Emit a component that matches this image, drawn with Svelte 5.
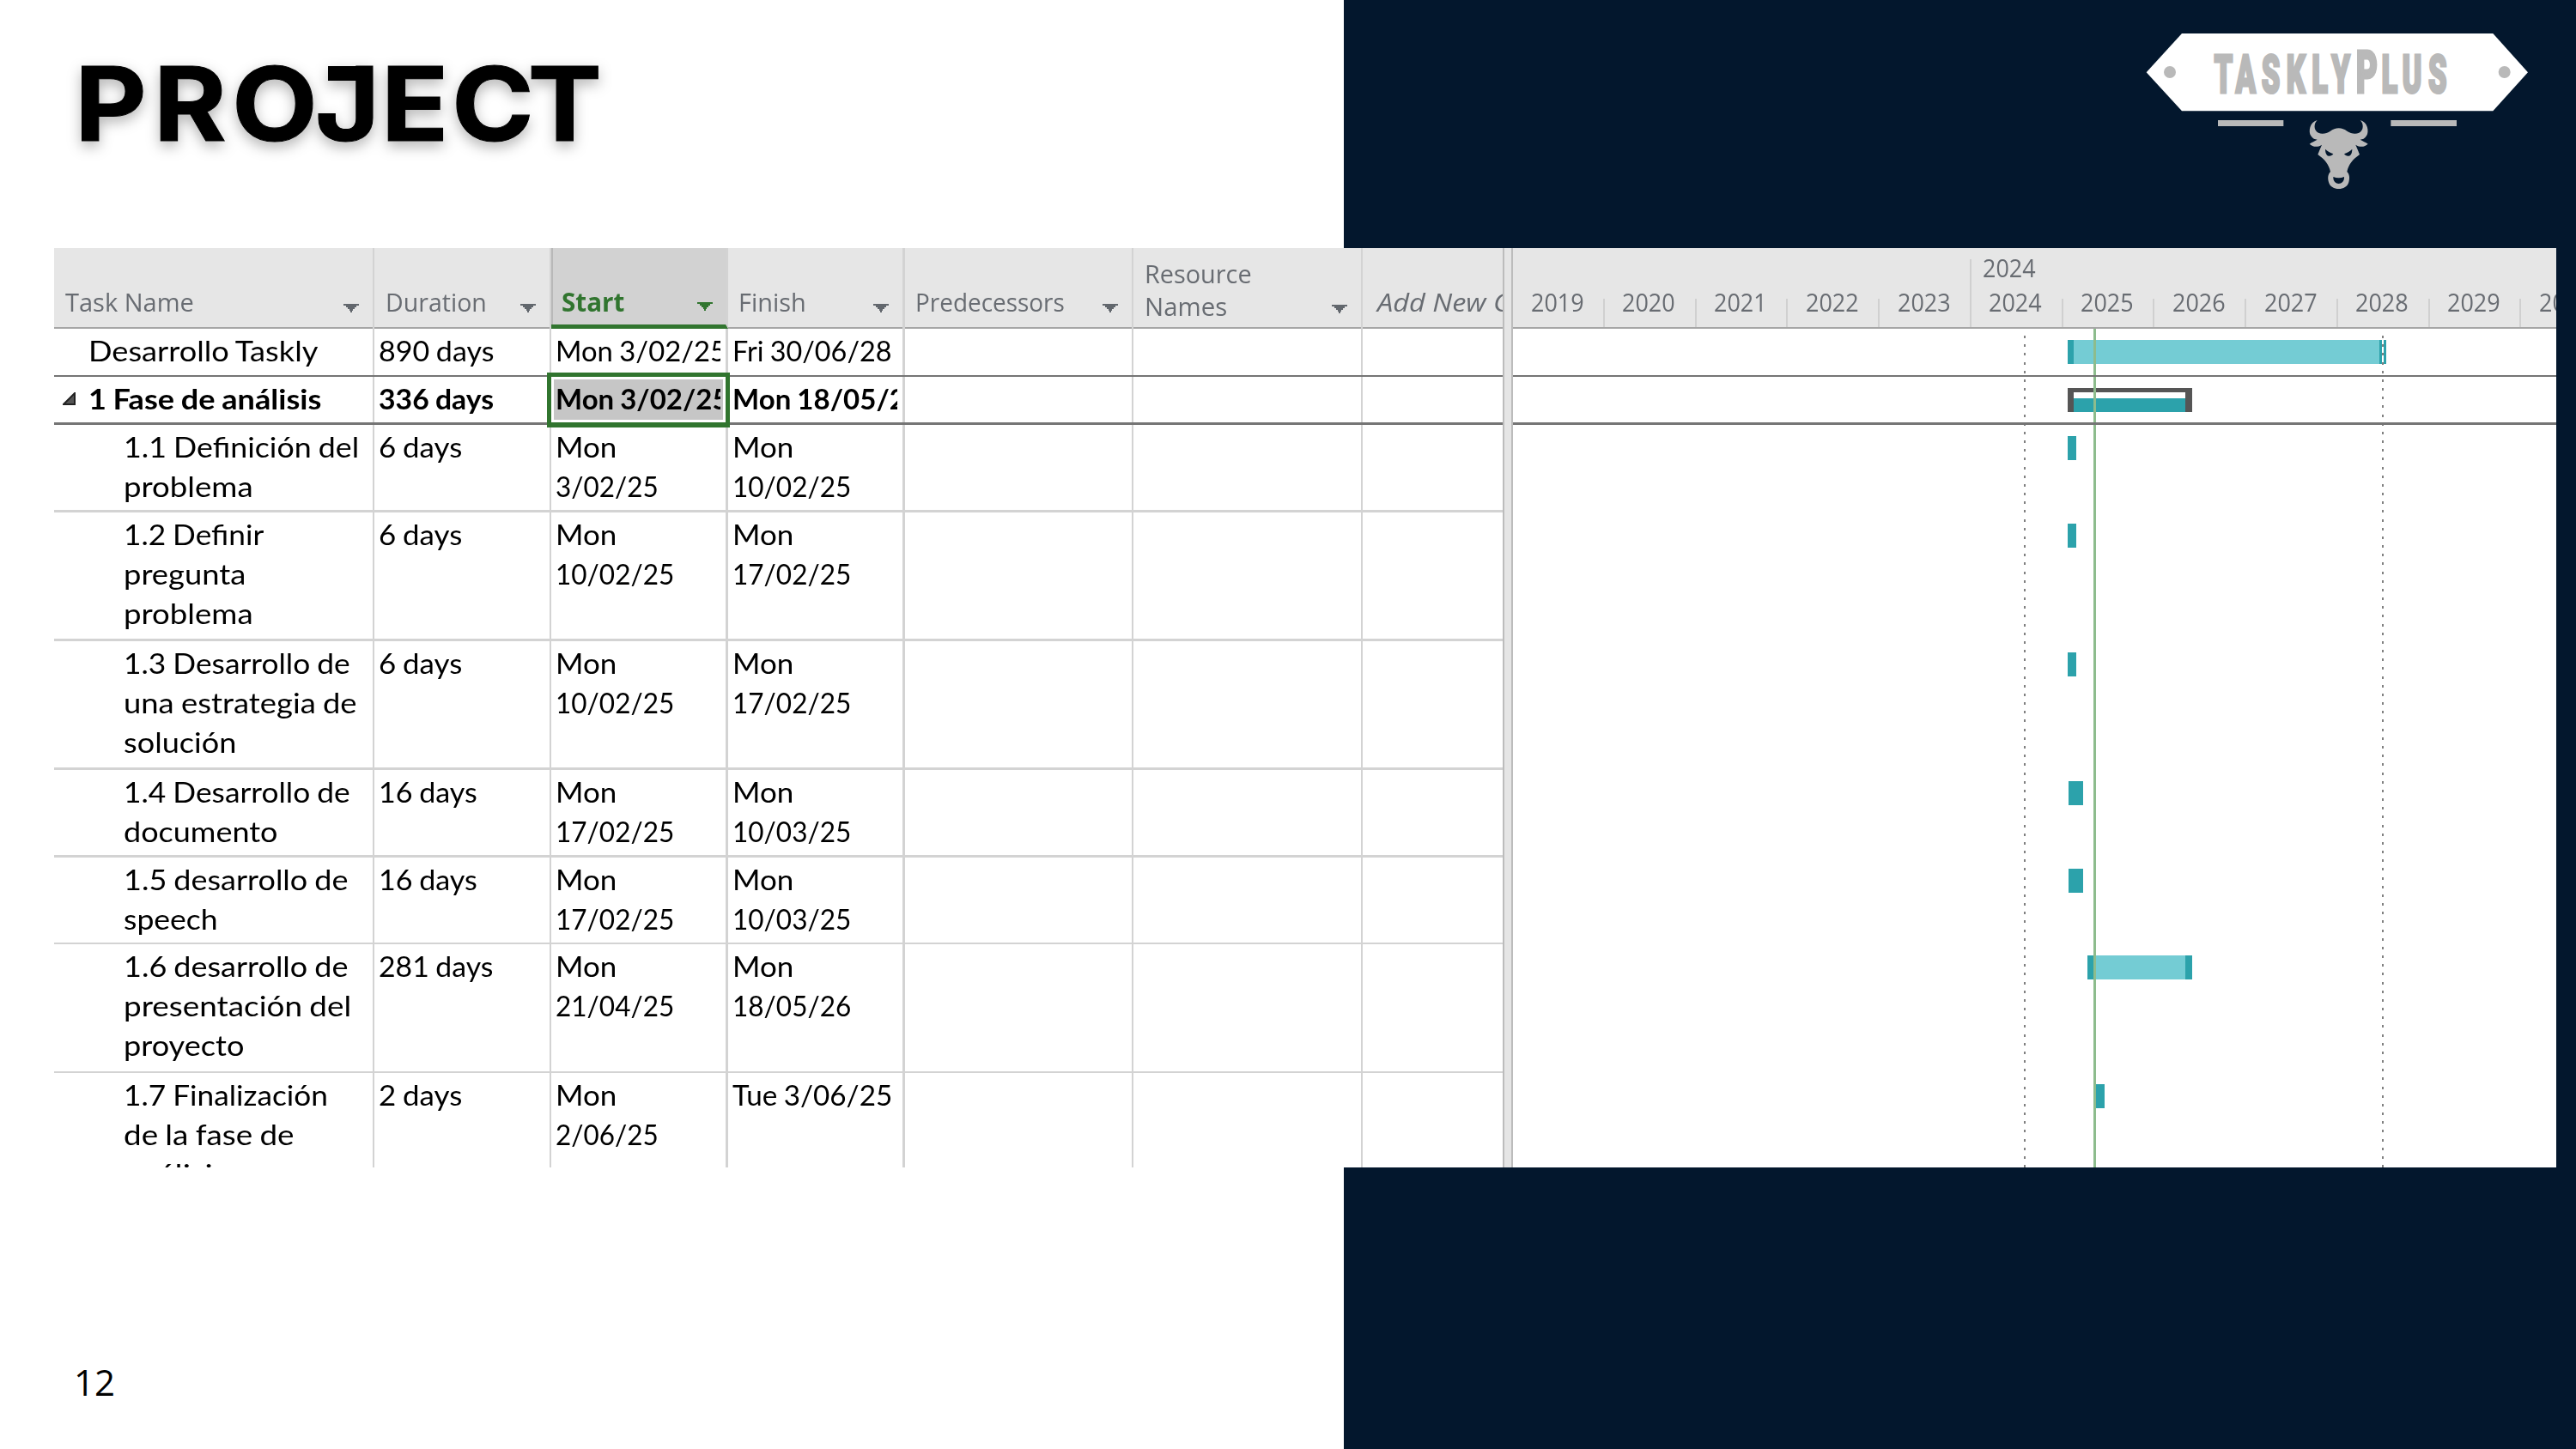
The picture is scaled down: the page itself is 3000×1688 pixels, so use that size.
<script>
  // Column captions and data, with the ink width every run of text occupies.
  const columns = [
    { lines: [['Task Name', 150]], pad: 13, arrow: true },
    { lines: [['Duration', 118]], pad: 13, arrow: true },
    { lines: [['Start', 73]], pad: 12, arrow: true, active: true },
    { lines: [['Finish', 79]], pad: 12, arrow: true },
    { lines: [['Predecessors', 174]], pad: 12, arrow: true },
    { lines: [['Resource', 125], ['Names', 96]], pad: 13, arrow: true, two: true },
    { lines: [['Add New C', 154]], pad: 17, italic: true },
  ];
  const mon = ['Mon', 71];
  const tasks = [
    { h: 56, indent: 40, name: [['Desarrollo Taskly', 267]], dur: ['890 days', 134], start: [['Mon 3/02/25', 199]], end: [['Fri 30/06/28', 186]], dark: true },
    { h: 56, indent: 40, bold: true, summary: true, name: [['1 Fase de análisis', 271]], dur: ['336 days', 134], start: [['Mon 3/02/25', 202]], end: [['Mon 18/05/26', 221]], dark: true },
    { h: 102, indent: 81, name: [['1.1 Definición del', 274], ['problema', 151]], dur: ['6 days', 97], start: [mon, ['3/02/25', 120]], end: [mon, ['10/02/25', 138]] },
    { h: 150, indent: 81, name: [['1.2 Definir', 163], ['pregunta', 142], ['problema', 151]], dur: ['6 days', 97], start: [mon, ['10/02/25', 138]], end: [mon, ['17/02/25', 138]] },
    { h: 150, indent: 81, name: [['1.3 Desarrollo de', 264], ['una estrategia de', 272], ['solución', 131]], dur: ['6 days', 97], start: [mon, ['10/02/25', 138]], end: [mon, ['17/02/25', 138]] },
    { h: 102, indent: 81, name: [['1.4 Desarrollo de', 264], ['documento', 180]], dur: ['16 days', 115], start: [mon, ['17/02/25', 138]], end: [mon, ['10/03/25', 138]] },
    { h: 101, indent: 81, thin: true, name: [['1.5 desarrollo de', 261], ['speech', 110]], dur: ['16 days', 115], start: [mon, ['17/02/25', 138]], end: [mon, ['10/03/25', 138]] },
    { h: 150, indent: 81, thin: true, name: [['1.6 desarrollo de', 261], ['presentación del', 265], ['proyecto', 140]], dur: ['281 days', 133], start: [mon, ['21/04/25', 138]], end: [mon, ['18/05/26', 138]] },
    { h: 110, indent: 81, last: true, name: [['1.7 Finalización', 238], ['de la fase de', 198], ['análisis', 120]], dur: ['2 days', 97], start: [mon, ['2/06/25', 120]], end: [['Tue 3/06/25', 186]] },
  ];
  const years = [2019, 2020, 2021, 2022, 2023, 2024, 2025, 2026, 2027, 2028, 2029, 2030];
  // Bars on the time scale: offsets inside the chart body.
  const bars = [
    { x: 646, y: 125, w: 10 }, { x: 646, y: 227, w: 10 }, { x: 646, y: 377, w: 10 },
    { x: 647, y: 527, w: 17 }, { x: 647, y: 629, w: 17 }, { x: 678, y: 880, w: 11 },
  ];
  const dots = Array.from({ length: 96 }, (_, i) => Math.round(8 + i * 10.17));

  function fit(node, width) {
    const apply = () => {
      node.style.transform = 'none';
      node.style.transform = `scaleX(${width / node.offsetWidth})`;
    };
    apply();
    document.fonts?.ready.then(apply);
  }
</script>

{#snippet lines(list)}
  {#each list as [text, width]}
    <div class="line"><span class="run" use:fit={width}>{text}</span></div>
  {/each}
{/snippet}

<main class="slide">
  <div class="side"></div>
  <header>
    <svg class="title" width="720" height="220" viewBox="0 0 720 220" role="img" aria-label="PROJECT">
      <g transform="scale(1.08 1)">
        <text x="80.5 165.5 250 339.5 411 487 569" y="164.5">PROJECT</text>
      </g>
      <rect x="382" y="77" width="36" height="17" />
    </svg>
    <svg class="logo" width="520" height="220" viewBox="0 0 1560 660">
      <path fill="#fff" d="M119 193 243 57H1330L1452 193 1330 328H243Z" />
      <g fill="#b9b9b9">
        <circle cx="201" cy="192" r="21" />
        <circle cx="1370" cy="192" r="21" />
        <path d="M369 360H598V381H369ZM973 360H1203V381H973Z" />
        <g transform="scale(.57 1)">
          <text class="brand" y="264" x="624 755 914 1067 1223 1343">TASKLY<tspan class="big" x="1493">P</tspan><tspan x="1650 1777 1937">LUS</tspan></text>
        </g>
        <path fill-rule="evenodd" d="M716 360C690 366 684 400 694 415C700 425 708 428 716 428C706 434 698 436 689 443C700 454 716 456 732 446C727 458 722 469 718 480C742 497 757 515 762 540C753 549 752 562 756 577C764 608 818 608 826 577C830 562 829 549 820 540C825 515 840 497 864 480C860 469 855 458 850 446C866 456 882 454 893 443C884 436 876 434 866 428C874 428 882 425 888 415C898 400 892 366 866 360C879 372 879 396 862 404C848 410 833 406 820 398C804 384 778 384 762 398C749 406 734 410 720 404C703 396 703 372 716 360ZM744 461C751 469 762 474 772 478C765 488 744 492 744 461ZM838 461C831 469 820 474 810 478C817 488 838 492 838 461ZM772 558C784 563 798 563 810 558C812 590 770 590 772 558Z" />
      </g>
    </svg>
  </header>

  <section class="project">
    <div class="table">
      <div class="row head">
        {#each columns as c}
          <div class="cell caption" class:active={c.active} class:two={c.two} class:italic={c.italic}>
            <div class="label" style:padding-left="{c.pad}px">{@render lines(c.lines)}</div>
            {#if c.arrow}
              <svg class="arrow" width="18" height="10" viewBox="0 0 18 10"><path d="M0 0H18V2H15V4H13V6H11V8H10V10H8V8H7V6H5V4H3V2H0Z" /></svg>
            {/if}
          </div>
        {/each}
      </div>
      {#each tasks as t}
        <div class="row" class:dark={t.dark} class:bold={t.bold} class:thin={t.thin || (t.indent === 40 && !t.bold)} class:last={t.last} style:height="{t.h}px">
          <div class="cell" style:padding-left="{t.indent}px">
            {@render lines(t.name)}
            {#if t.summary}
              <svg class="twisty" width="15" height="15" viewBox="0 0 15 15"><path d="M14 1V14H1Z" /></svg>
            {/if}
          </div>
          <div class="cell data">{@render lines([t.dur])}</div>
          <div class="cell date" class:selected={t.summary}><div class="clip">{@render lines(t.start)}</div></div>
          <div class="cell date"><div class="clip">{@render lines(t.end)}</div></div>
          <div class="cell"></div>
          <div class="cell"></div>
          <div class="cell"></div>
        </div>
      {/each}
    </div>
    <div class="splitter"></div>
    <div class="gantt">
      <div class="scale">
        <div class="tier"><span class="run" use:fit={62}>2024</span></div>
        <div class="years">
          {#each years as y}
            <div class="year" class:major={y === 2024}><span class="run" use:fit={62}>{y}</span></div>
          {/each}
        </div>
      </div>
      <svg class="chart" width="1215" height="977" viewBox="0 0 1215 977" shape-rendering="crispEdges">
        <rect class="body" x="646" y="13" width="363" height="28" />
        <path class="teal" d="M646 13h7v28h-7zM1009 13h8v28h-8z" />
        <rect x="1012" y="13" width="2" height="28" fill="#fff" />
        <path class="bracket" d="M646 69H791V97H783V74H653V97H646Z" />
        <rect class="teal" x="653" y="81" width="130" height="16" />
        {#each bars as b}
          <rect class="teal" x={b.x} y={b.y} width={b.w} height="28" />
        {/each}
        <rect class="body" x="669" y="730" width="122" height="28" />
        <path class="teal" d="M669 730h7v28h-7zM783 730h8v28h-8z" />
        {#each dots as y}
          <path class="dot" d="M595 {y}h2v3h-2zM1012 {y}h2v3h-2z" />
        {/each}
        <rect x="676" y="0" width="3" height="977" fill="#8dbc8d" />
        <path class="rule" d="M0 54h1215v2H0zM0 109h1215v3H0z" />
      </svg>
    </div>
  </section>

  <footer>12</footer>
</main>

<style>
  :global(body) { margin: 0; background: #fff; }
  .slide {
    position: relative;
    width: 3000px;
    height: 1688px;
    overflow: hidden;
    display: flex;
    flex-direction: column;
    font-family: Lato, "Open Sans", sans-serif;
    color: #000;
  }
  .side { position: absolute; inset: 0 0 0 1565px; background: #03172d; }
  header { position: relative; height: 289px; display: flex; justify-content: space-between; padding-right: 20px; flex: none; }
  .title { filter: drop-shadow(0 6px 8px rgba(0, 0, 0, .3)); }
  .title text { font: 700 120px Inter, sans-serif; stroke: #000; stroke-width: 1px; }
  .logo { margin-top: 20px; }
  .brand { font: 900 182px Roboto, sans-serif; stroke: #b9b9b9; stroke-width: 9px; }
  .big { font-size: 204px; }

  .project { position: relative; display: flex; flex: none; width: 2914px; height: 1071px; margin-left: 63px; background: #fff; overflow: hidden; }
  .table { width: 1687px; flex: none; overflow: hidden; }
  .row { display: grid; grid-template-columns: 373px 206px 206px 206px 266px 267px 163px; box-sizing: border-box; border-bottom: 3px solid #d3d3d3; }
  .row.thin { border-bottom-width: 2px; }
  .row.dark { border-bottom-color: #757575; }
  .row.last { border-bottom: 0; }
  .row.bold { font-weight: 700; }
  .cell { position: relative; box-sizing: border-box; border-right: 2px solid #d3d3d3; padding-top: 3px; font-size: 32px; min-width: 0; word-spacing: -1px; }
  .cell:nth-child(3), .cell:nth-child(4) { border-right-width: 3px; }
  .cell:last-child { border-right: 0; }
  .data { padding-left: 5px; }
  .date { padding-left: 3px; }
  .clip { overflow: hidden; width: 194px; padding-left: 2px; box-sizing: border-box; }
  .line { height: 45.75px; line-height: 45.75px; white-space: nowrap; }
  .run { display: inline-block; transform-origin: 0 50%; white-space: nowrap; }
  .selected::before { content: ""; position: absolute; left: -5px; top: -5px; width: 213px; height: 64px; box-sizing: border-box; border: 5px solid #31752f; border-bottom-width: 6px; background: #c6c6c6; box-shadow: inset 0 0 0 3px #fff; z-index: 1; }
  .selected .clip { position: relative; z-index: 2; }
  .twisty { position: absolute; left: 10px; top: 18px; fill: #555; stroke: #222; stroke-width: 2; }

  .head { height: 94px; background: #e6e6e6; border-bottom: 2px solid #a6a6a6; }
  .caption { display: flex; align-items: flex-end; justify-content: space-between; padding: 0 16px 12px 0; font-family: "Open Sans", sans-serif; font-size: 30px; color: #686c72; overflow: hidden; word-spacing: 0; }
  .caption .line { height: 38px; line-height: 38px; }
  .caption.two { padding-bottom: 7px; }
  .caption.two .arrow { margin-bottom: 11px; }
  .caption.italic { font-style: italic; }
  .arrow { fill: #62676d; flex: none; margin-bottom: 7px; }
  .label { flex: none; }
  .caption.active { color: #31752f; font-weight: 700; background: #d2d2d2; height: 94px; border-bottom: 5px solid #31752f; padding-bottom: 7px; padding-right: 15px; box-shadow: inset 2px 0 #b8b8b8; }
  .active .arrow { fill: #31752f; margin-bottom: 9px; }

  .splitter { width: 12px; flex: none; box-sizing: border-box; background: #e5e5e5; border: solid #bcbcbc; border-width: 0 2px; }
  .gantt { width: 1215px; flex: none; overflow: hidden; }
  .scale { box-sizing: border-box; height: 94px; background: #e6e6e6; border-bottom: 2px solid #a6a6a6; font: 30px "Open Sans", sans-serif; color: #686c72; display: flex; flex-direction: column; justify-content: space-between; }
  .tier { padding: 3px 0 0 547px; height: 38px; line-height: 39px; }
  .years { display: grid; grid-template-columns: repeat(12, 106.75px); height: 33px; margin-left: -2px; align-items: stretch; }
  .year { box-sizing: border-box; border-left: 2.5px solid #d0d0d0; padding-left: 20.5px; line-height: 8px; height: 33px; }
  .major { height: 79px; margin-top: -46px; padding-top: 46px; }
  .chart { display: block; }
  .body { fill: #74ccd4; }
  .teal { fill: #2ca2ab; }
  .bracket { fill: #555; }
  .dot { fill: #808080; }
  .rule { fill: #757575; }

  footer { position: relative; padding: 220px 0 0 86px; font: 42px/60px "Open Sans", sans-serif; }
</style>
